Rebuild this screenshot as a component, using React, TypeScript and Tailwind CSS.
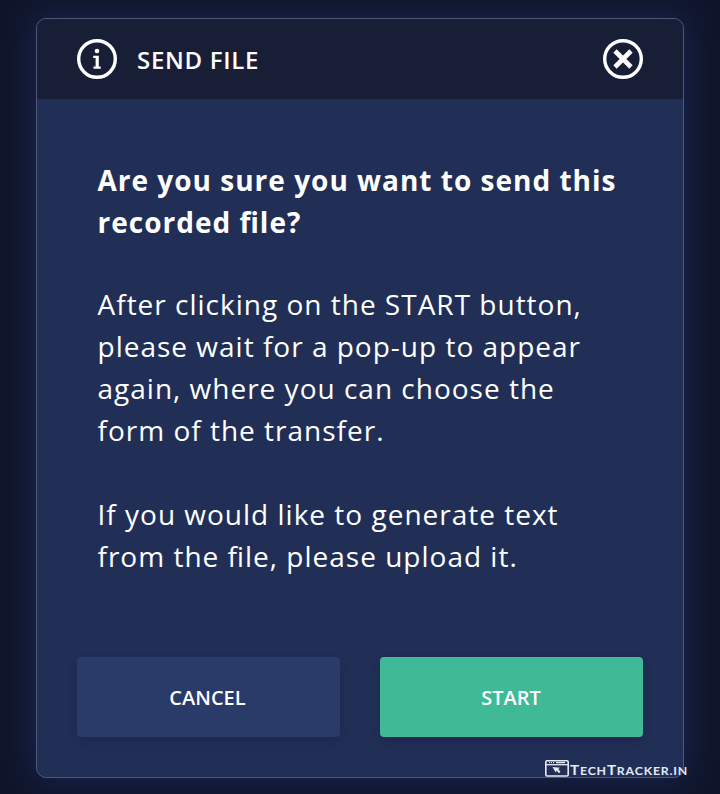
export default function App() {
  return (
    <main className="h-[794px] w-[720px] overflow-hidden bg-[#0f152a] px-9 pt-[18px] font-['Open_Sans','Noto_Sans',sans-serif] text-white">
      <section className="relative h-[760px] w-[648px] rounded-[10px] border border-[#505678] bg-[#212f57] shadow-[0_0_34px_2px_#1a2650]">
        <header className="flex h-20 items-center justify-between rounded-t-[9px] bg-[#191e37] px-10">
          <div className="flex items-center gap-5">
            <svg width="40" height="40" viewBox="0 0 40 40" fill="none">
              <circle cx="20" cy="20" r="18.3" stroke="white" strokeWidth="3.4" />
              <circle cx="20" cy="12" r="2.3" fill="white" />
              <path d="M16.2 16.7h5.6v10.9h1.9v2.2h-7.2v-2.2h2.1v-8.6h-2.4z" fill="white" />
            </svg>
            <h1 className="pt-0.5 text-[24px] font-semibold tracking-[0.7px]">SEND FILE</h1>
          </div>
          <svg width="40" height="40" viewBox="0 0 40 40" fill="none" stroke="white">
            <circle cx="20" cy="20" r="18.3" strokeWidth="3.4" />
            <path d="m12 12 16 16m0-16L12 28" strokeWidth="4.6" />
          </svg>
        </header>
        <div className="h-[558px] pl-[60.5px] pt-[60px] text-[28px] leading-[42px] tracking-[1px] whitespace-nowrap [font-feature-settings:'liga']">
          <p className="font-bold">Are you sure you want to send this<br />recorded file?</p>
          <p className="mt-[40px]">After clicking on the START button,<br />please wait for a pop-up to appear<br />again, where you can choose the<br />form of the transfer.</p>
          <p className="mt-[42px]">If you would like to generate text<br />from the file, please upload it.</p>
        </div>
        <div className="flex gap-10 px-10 text-[20px] font-semibold">
          <button className="h-20 w-[263px] rounded bg-[#2a3a69] pt-0.5 pr-0.5 shadow-[0_4px_10px_rgba(20,24,50,0.3)]">CANCEL</button>
          <button className="h-20 w-[263px] rounded bg-[#40b996] pt-0.5 pr-px shadow-[0_4px_10px_rgba(20,24,50,0.3)]">START</button>
        </div>
        <div className="absolute top-[740px] left-[508px] flex items-start text-[#e6e9f5]">
          <svg width="24" height="18" viewBox="0 0 24 18" fill="none" stroke="currentColor">
            <rect x="0.8" y="1.8" width="22.4" height="15.2" rx="1.3" strokeWidth="1.6" />
            <path d="M1 5.7h22" strokeWidth="1.3" />
            <path d="M4 3.6h1m1 0h1m1 0h1m2 0h9" strokeWidth="1.4" />
            <path d="m7.5 8 7.5.7-1.7 1.3 2.2 3-1.7 1.2-2-2.6-1.1 1.9Z" fill="currentColor" stroke="none" />
          </svg>
          <svg width="120" height="18" viewBox="0 0 120 18" fill="currentColor" className="font-[Lato] font-bold">
            <text x="1" y="15.5" textLength="118" lengthAdjust="spacingAndGlyphs" fontSize="13" letterSpacing="0.7">T<tspan fontSize="10.5">ECH</tspan>T<tspan fontSize="10.5">RACKER.IN</tspan></text>
          </svg>
        </div>
      </section>
    </main>
  );
}
